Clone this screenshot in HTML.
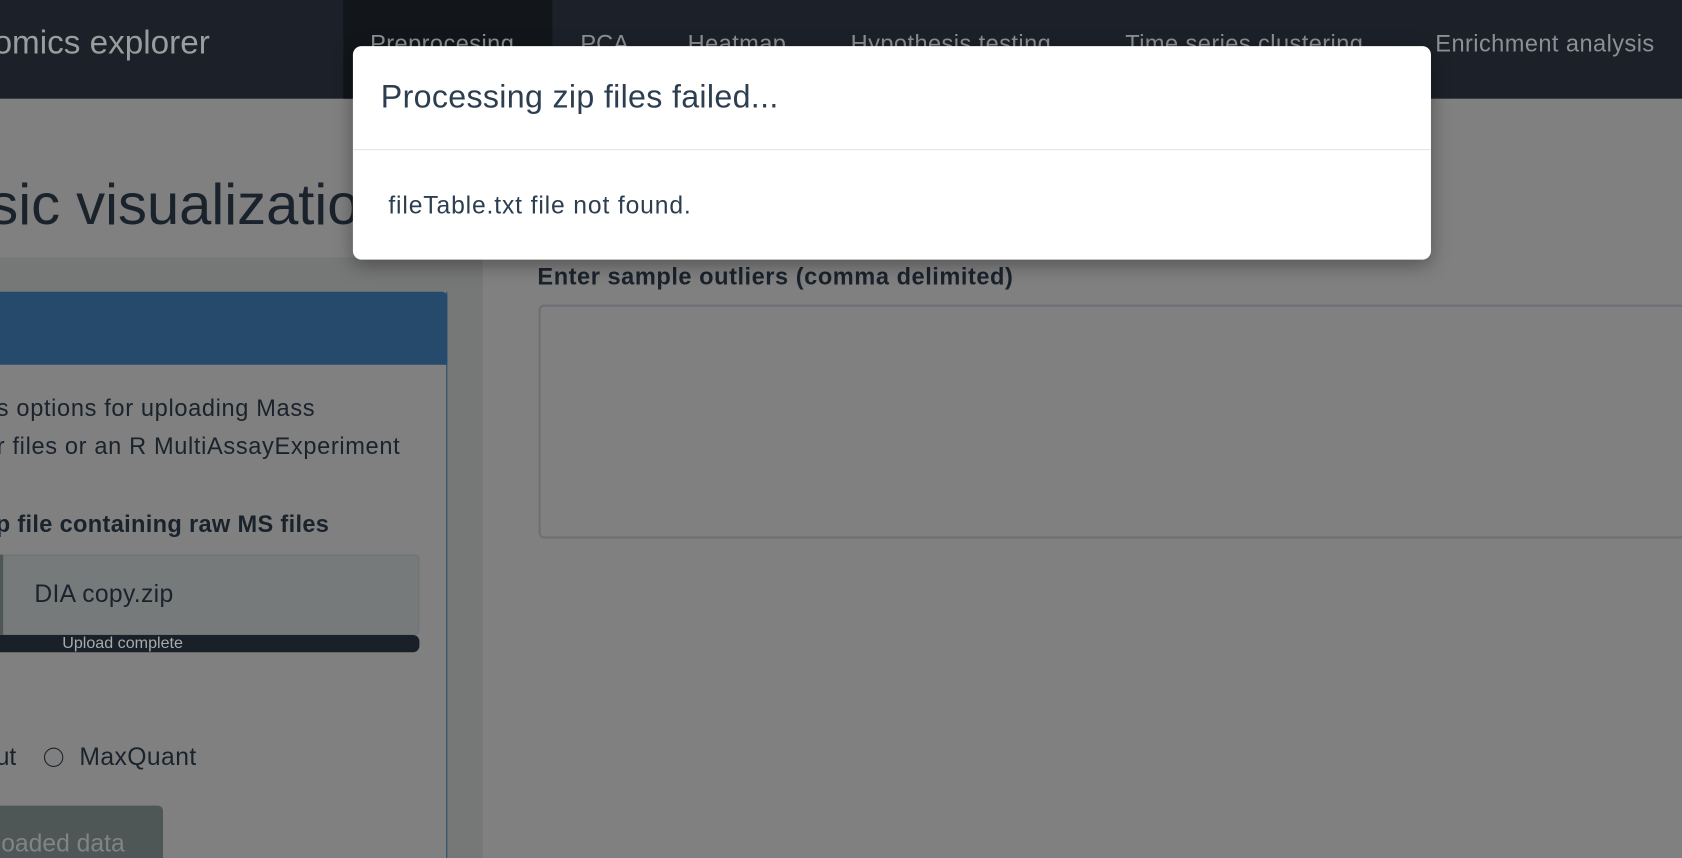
<!DOCTYPE html>
<html><head><meta charset="utf-8"><style>
html,body{margin:0;padding:0;width:1682px;height:858px;overflow:hidden;background:#808080}
#w{position:absolute;left:0;top:0;width:1568px;height:800px;transform:scale(1.0727);transform-origin:0 0;font-family:"Liberation Sans",sans-serif;background:#808080;overflow:hidden}
.a{position:absolute;white-space:nowrap}
</style></head><body><div id="w">
<div class="a" style="left:0;top:0;width:1568px;height:92px;background:#1c2129"></div>
<div class="a" style="left:320px;top:0;width:195px;height:92px;background:#12161b"></div>
<div class="a" style="left:-6px;top:22px;font-size:31px;color:#9a9c9e">omics explorer</div>
<div class="a" style="left:345px;top:28px;font-size:22px;color:#8c9094;letter-spacing:0.4px">Preprocesing</div>
<div class="a" style="left:541px;top:28px;font-size:22px;color:#8c9094">PCA</div>
<div class="a" style="left:641px;top:28px;font-size:22px;color:#8c9094;letter-spacing:0.4px">Heatmap</div>
<div class="a" style="left:793px;top:28px;font-size:22px;color:#8c9094;letter-spacing:0.4px">Hypothesis testing</div>
<div class="a" style="left:1049px;top:28px;font-size:22px;color:#8c9094;letter-spacing:0.4px">Time series clustering</div>
<div class="a" style="left:1338px;top:28px;font-size:22px;color:#8c9094;letter-spacing:0.4px">Enrichment analysis</div>

<div class="a" style="left:-10px;top:160px;font-size:54px;color:#1a222c">sic visualization</div>
<div class="a" style="left:0;top:240px;width:450px;height:560px;background:#767777"></div>
<div class="a" style="left:0;top:272px;width:416px;height:528px;background:#808080;border-right:1px solid #264a6c"></div>
<div class="a" style="left:0;top:272px;width:417px;height:68px;background:#264a6c;border-top-right-radius:5px"></div>
<div class="a" style="left:-3px;top:368px;font-size:22px;color:#1a222c;letter-spacing:0.6px">s options for uploading Mass</div>
<div class="a" style="left:-3px;top:403px;font-size:22px;color:#1a222c;letter-spacing:0.6px">r files or an R MultiAssayExperiment</div>
<div class="a" style="left:-4px;top:476px;font-size:22px;font-weight:bold;color:#1a222c;letter-spacing:0.3px">p file containing raw MS files</div>
<div class="a" style="left:0;top:517px;width:389px;height:73px;background:#767a7a;border:1px solid #6e7276;border-radius:4px"></div>
<div class="a" style="left:0;top:517px;width:3px;height:75px;background:#4f5756"></div>
<div class="a" style="left:32px;top:540px;font-size:23px;color:#1a222c;letter-spacing:0.3px">DIA copy.zip</div>
<div class="a" style="left:0;top:592px;width:391px;height:16px;background:#1a2028;border-radius:0 6px 6px 0"></div>
<div class="a" style="left:58px;top:591px;font-size:15px;color:#a8aaac">Upload complete</div>
<div class="a" style="left:-4px;top:692px;font-size:23px;color:#1a222c">ut</div>
<div class="a" style="left:41px;top:697px;width:16px;height:16px;border:1.5px solid #1a222c;border-radius:50%"></div>
<div class="a" style="left:74px;top:692px;font-size:23px;color:#1a222c;letter-spacing:0.4px">MaxQuant</div>
<div class="a" style="left:0;top:751px;width:152px;height:60px;background:#4f5756;border-radius:0 5px 0 0"></div>
<div class="a" style="left:-4px;top:773px;font-size:23px;color:#7f8585">loaded data</div>

<div class="a" style="left:501px;top:245px;font-size:22px;font-weight:bold;color:#1a222c;letter-spacing:0.5px">Enter sample outliers (comma delimited)</div>
<div class="a" style="left:502px;top:284px;width:1080px;height:214px;border:2px solid #6c7075;border-radius:5px"></div>

<div class="a" style="left:329px;top:43px;width:1005px;height:199px;background:#fff;border-radius:8px;box-shadow:0 5px 18px rgba(0,0,0,0.35)"></div>
<div class="a" style="left:329px;top:139px;width:1005px;height:1px;background:#e5e5e5"></div>
<div class="a" style="left:355px;top:74px;font-size:30px;color:#2c3e50;letter-spacing:0.3px">Processing zip files failed...</div>
<div class="a" style="left:362px;top:178px;font-size:23px;color:#2c3e50;letter-spacing:0.8px">fileTable.txt file not found.</div>
</div></body></html>
